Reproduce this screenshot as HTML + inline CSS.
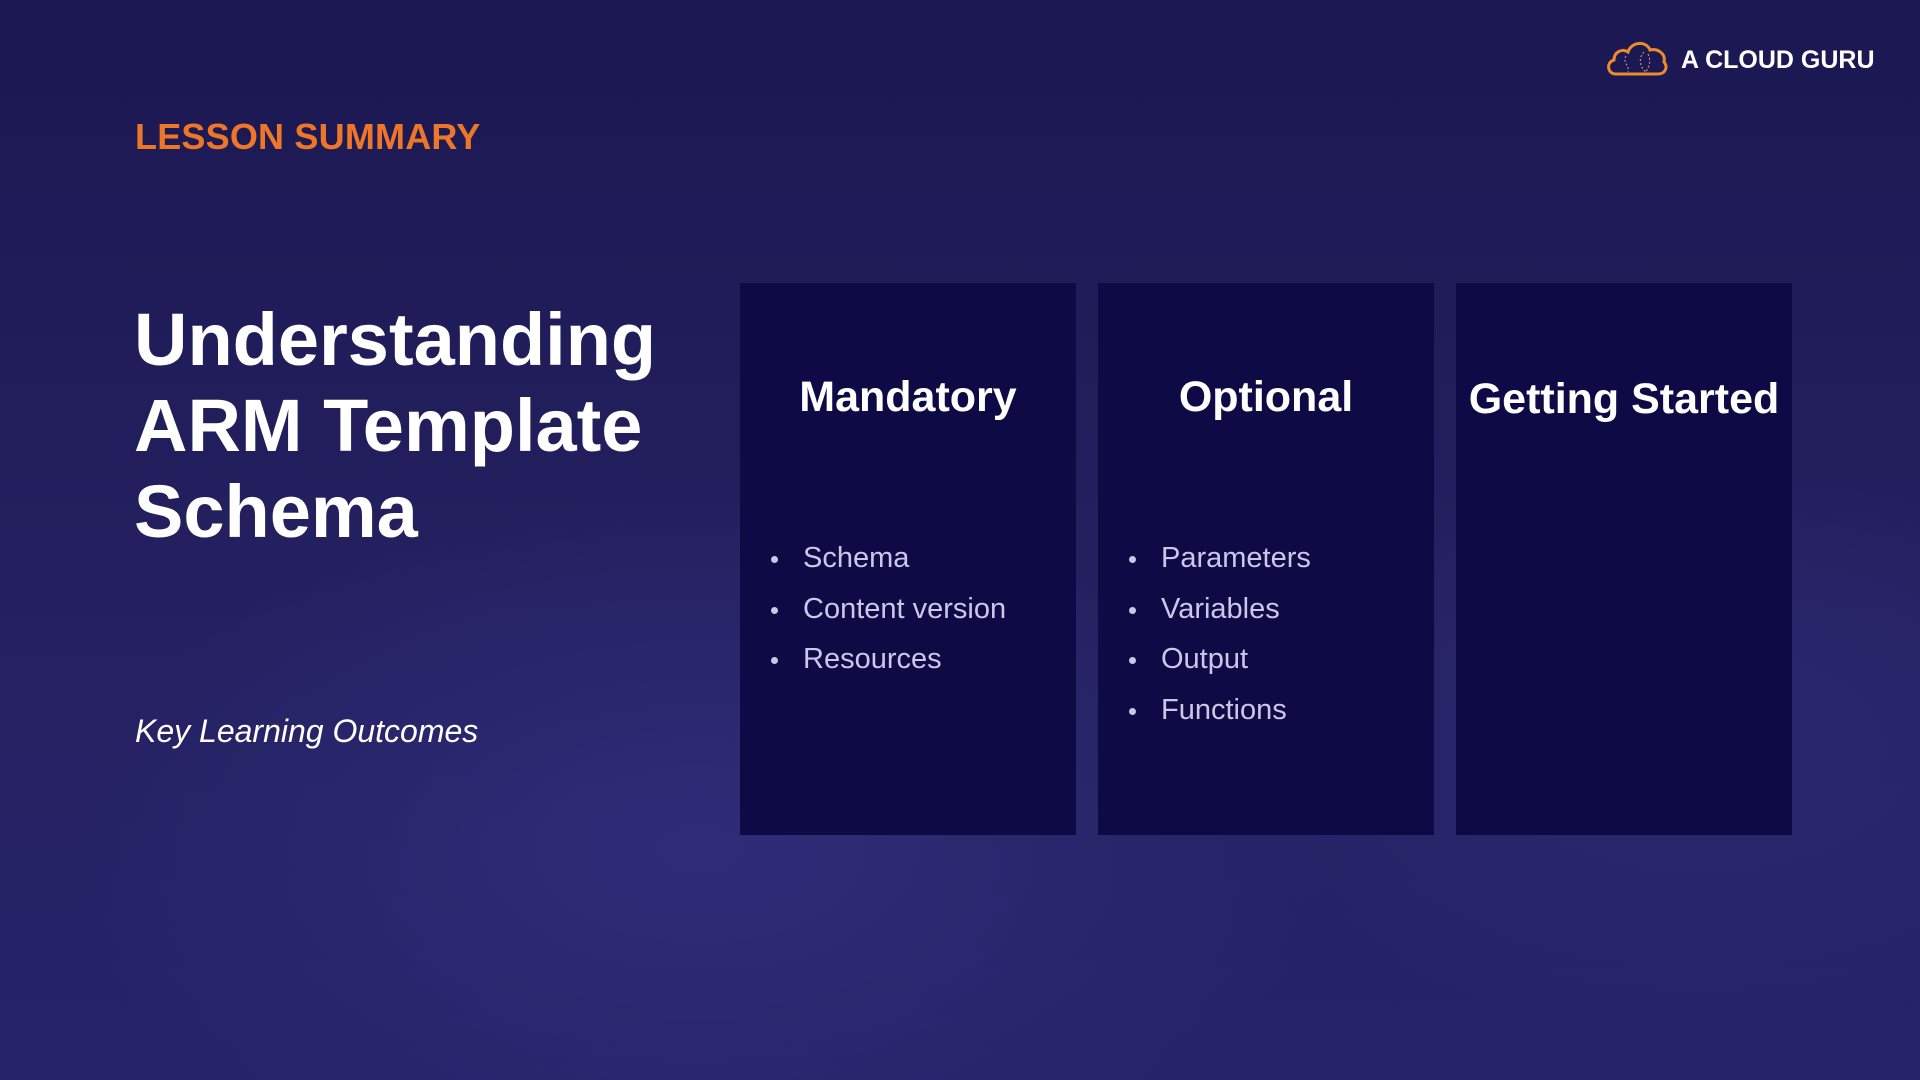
<!DOCTYPE html>
<html><head><meta charset="utf-8"><style>
*{margin:0;padding:0;box-sizing:border-box}
body{width:1920px;height:1080px;overflow:hidden;position:relative;font-family:"Liberation Sans",sans-serif;
background:radial-gradient(ellipse 900px 500px at 700px 850px,#302c78 0%,rgba(40,36,110,0) 70%),
radial-gradient(ellipse 700px 400px at 1700px 750px,#2c2870 0%,rgba(40,36,110,0) 70%),
linear-gradient(180deg,#1b1752 0%,#24205f 50%,#27236a 100%);}
.card{position:absolute;top:283px;width:336px;height:552px;background:#0e0a45}
.card h2{position:absolute;left:0;width:100%;text-align:center;color:#fff;font-size:43px;font-weight:bold;top:90px}
.card ul{position:absolute;top:259px;left:31px;list-style:none;color:#c9c8e6;font-size:29px}
.card li{height:50.7px;position:relative;padding-left:32px}
.card li:before{content:"";position:absolute;left:0;top:14px;width:7px;height:7px;border-radius:50%;background:#c9c8e6}
</style></head><body>
<div style="position:absolute;left:135px;top:116px;color:#ee7628;font-size:36px;font-weight:bold;letter-spacing:0.2px">LESSON SUMMARY</div>
<div style="position:absolute;left:134px;top:297px;color:#fff;font-size:74px;font-weight:bold;line-height:86px">Understanding<br>ARM Template<br>Schema</div>
<div style="position:absolute;left:135px;top:713px;color:#fff;font-size:32px;font-style:italic">Key Learning Outcomes</div>
<div class="card" style="left:740px"><h2>Mandatory</h2><ul><li>Schema</li><li>Content version</li><li>Resources</li></ul></div>
<div class="card" style="left:1098px"><h2>Optional</h2><ul><li>Parameters</li><li>Variables</li><li>Output</li><li>Functions</li></ul></div>
<div class="card" style="left:1456px"><h2 style="top:92px">Getting Started</h2></div>
<svg style="position:absolute;left:1604px;top:38px" width="66" height="40" viewBox="0 0 66 40">
<path d="M12 36 C3 36 2 24 10 22 C10 14 18 10 24 14 C27 4 42 2 46 12 C54 10 62 16 60 24 C64 28 62 36 54 36 Z" fill="none" stroke="#ee8a2a" stroke-width="3"/>
<path d="M22 18 C18 24 26 28 24 34 M40 14 C34 20 36 30 42 34 M44 16 C48 24 44 30 42 34" fill="none" stroke="#c98a6a" stroke-width="1.2" stroke-dasharray="2 2"/>
</svg>
<div style="position:absolute;left:1681px;top:46px;color:#fff;font-size:25px;font-weight:bold">A CLOUD GURU</div>
</body></html>
